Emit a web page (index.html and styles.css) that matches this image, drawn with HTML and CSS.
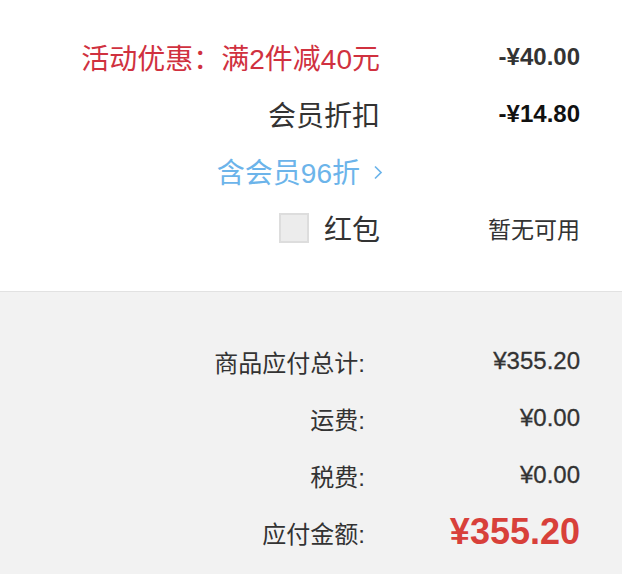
FILE: index.html
```html
<!DOCTYPE html>
<html>
<head>
<meta charset="utf-8">
<link rel="stylesheet" href="styles.css">
</head>
<body>
<div class="page">
  <section class="discounts">
    <div class="row">
      <div class="label promo">活动优惠：满2件减40元</div>
      <div class="value strong">-¥40.00</div>
    </div>
    <div class="row">
      <div class="label">会员折扣</div>
      <div class="value strong dark">-¥14.80</div>
    </div>
    <div class="row">
      <div class="label member">含会员96折<svg class="chev" width="10" height="15" viewBox="0 0 10 15"><path d="M2 1.5 L8 7.5 L2 13.5" fill="none" stroke="#6cb4ea" stroke-width="1.7"/></svg></div>
      <div class="value"></div>
    </div>
    <div class="row">
      <div class="label"><span class="checkbox"></span>红包</div>
      <div class="value small">暂无可用</div>
    </div>
  </section>
  <section class="summary">
    <div class="srow">
      <div class="slabel">商品应付总计:</div>
      <div class="svalue">¥355.20</div>
    </div>
    <div class="srow">
      <div class="slabel">运费:</div>
      <div class="svalue">¥0.00</div>
    </div>
    <div class="srow">
      <div class="slabel">税费:</div>
      <div class="svalue">¥0.00</div>
    </div>
    <div class="srow">
      <div class="slabel">应付金额:</div>
      <div class="svalue total">¥355.20</div>
    </div>
  </section>
</div>
</body>
</html>
```

FILE: styles.css
```css
html, body {
  margin: 0;
  padding: 0;
}
body {
  width: 622px;
  height: 574px;
  overflow: hidden;
  background: #f2f2f2;
  font-family: "Liberation Sans", "Noto Sans CJK SC", sans-serif;
  color: #333;
}
.page {
  display: flex;
  flex-direction: column;
}
.discounts {
  background: #fff;
  height: 292px;
  box-sizing: border-box;
  padding: 37px 42px 0 0;
  display: flex;
  flex-direction: column;
  gap: 17px;
  border-bottom: 1px solid #e2e2e2;
}
.row {
  display: flex;
  justify-content: flex-end;
  align-items: center;
  height: 40px;
}
.label {
  font-size: 28px;
  color: #333;
  display: flex;
  align-items: center;
  white-space: nowrap;
}
.promo {
  color: #d0313f;
}
.member {
  color: #6cb4ea;
}
.chev {
  margin-left: 13px;
  margin-right: -3px;
  margin-top: 2px;
}
.checkbox {
  width: 26px;
  height: 26px;
  background: #ececec;
  border: 2px solid #dddddd;
  margin-right: 15px;
  margin-left: 1px;
  box-sizing: content-box;
}
.value {
  width: 200px;
  text-align: right;
  font-size: 24px;
}
.strong {
  font-weight: bold;
  color: #333;
}
.dark {
  color: #111;
}
.small {
  font-size: 23px;
  color: #333;
}
.summary {
  padding: 49px 42px 0 0;
  display: flex;
  flex-direction: column;
  gap: 17px;
}
.srow {
  display: flex;
  justify-content: flex-end;
  align-items: center;
  height: 40px;
}
.slabel {
  font-size: 24px;
  color: #333;
}
.svalue {
  width: 215px;
  text-align: right;
  font-size: 24px;
  color: #333;
  -webkit-text-stroke: 0.3px #333;
}
.total {
  font-size: 36px;
  font-weight: bold;
  color: #d8403a;
  -webkit-text-stroke: 0;
}
```
